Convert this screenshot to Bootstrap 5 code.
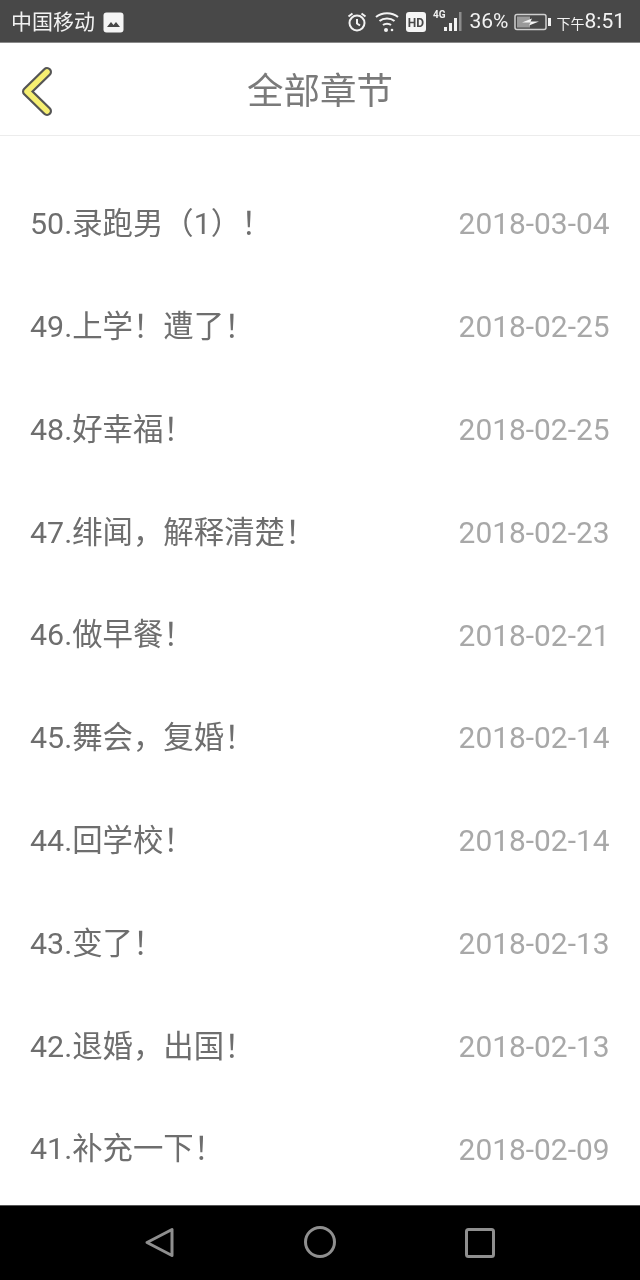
<!DOCTYPE html>
<html lang="zh">
<head>
<meta charset="utf-8">
<title>全部章节</title>
<link href="https://cdn.jsdelivr.net/npm/bootstrap@5.3.0/dist/css/bootstrap.min.css" rel="stylesheet">
<style>
html,body{margin:0;height:1280px;overflow:hidden;background:#fff}
body{font-family:Roboto,"Noto Sans CJK SC",sans-serif}
.phone{height:1280px;width:640px}
.statusbar{height:43px;background:#484848;color:#f2f2f2;font-size:21px;padding:0 15px 0 11px;border-bottom:1px solid #8a8a8a;will-change:transform}
.statusbar .carrier{line-height:1;margin-top:2px}
.picicon{margin-left:8px;margin-top:2px}
.ic-alarm{margin-top:1px}
.ic-wifi{margin-left:7px;margin-top:1px}
.ic-hd{margin-left:7px;margin-top:1px}
.ic-sig{margin-left:7px}
.pct{font-size:21px;line-height:1;margin-left:5px;margin-top:1px}
.ic-bat{margin-left:5px;margin-top:1px}
.ampm{font-size:14px;line-height:1;margin-top:5px;margin-left:6px}
.clock{font-size:21px;line-height:1;margin-top:1px}
.topbar{height:93px;border-bottom:1px solid #ececec;padding-left:20px}
.topbar .ttl{font-size:36.5px;color:#7a7a7a;line-height:1;left:0;right:0;top:50%;margin-top:3px;transform:translateY(-50%);text-align:center;will-change:transform}
.backic{margin-top:4px}
.chapters{padding-top:37px;flex:1 1 auto;min-height:0;overflow:hidden;will-change:transform}
.chap{height:102.8px;padding:0 30.5px 0 30px}
.chap .nm{font-size:30.4px;color:#6e6e6e;line-height:1}
.chap .dt{font-size:29.9px;color:#a8a8a8;line-height:1}
.navbarbottom{height:75px;background:#000;border-top:1px solid #555;flex:none}
</style>
</head>
<body>
<div class="phone d-flex flex-column">
  <div class="statusbar d-flex align-items-center">
    <span class="carrier">中国移动</span>
    <svg class="picicon" width="21" height="21" viewBox="0 0 21 21"><rect x="0.5" y="0.5" width="20" height="20" rx="3" fill="#f5f5f5"/><path d="M4 15l4-5 2.500 3 2.500-3 4 5z" fill="#484848"/></svg>
    <span class="ms-auto d-flex align-items-center">
      <svg class="ic-alarm" width="22" height="22" viewBox="0 0 22 22" fill="none" stroke="#f2f2f2" stroke-width="2"><circle cx="11" cy="12" r="7.500"/><path d="M11 8v4.500l3 2M2.500 5.500l4-3M19.500 5.500l-4-3"/></svg>
      <svg class="ic-wifi" width="24" height="22" viewBox="0 0 24 22" fill="none" stroke="#f2f2f2" stroke-width="2"><path d="M1 6c6-5 16-5 22 0M4.500 10c4-3.500 11-3.500 15 0M8 14c2-1.700 6-1.700 8 0"/><circle cx="11" cy="19" r="2" fill="#f2f2f2" stroke="none"/><circle cx="17" cy="19" r="1.300" fill="#f2f2f2" stroke="none"/></svg>
      <svg class="ic-hd" width="20" height="20" viewBox="0 0 20 20"><rect width="20" height="20" rx="3" fill="#f5f5f5"/><text x="10" y="15" text-anchor="middle" font-size="12" font-weight="700" font-family="Roboto" fill="#484848">HD</text></svg>
      <svg class="ic-sig" width="32" height="24" viewBox="0 0 32 24"><text x="0" y="9" font-size="10" font-weight="700" font-family="Roboto" fill="#f2f2f2">4G</text><rect x="11" y="18" width="3" height="4" fill="#f2f2f2"/><rect x="16" y="14" width="3" height="8" fill="#f2f2f2"/><rect x="21" y="9" width="3" height="13" fill="#f2f2f2"/><rect x="26" y="3" width="2.500" height="19" fill="#8d8d8d"/></svg>
      <span class="pct">36%</span>
      <svg class="ic-bat" width="37" height="18" viewBox="0 0 37 18"><rect x="1" y="1.500" width="31" height="15" rx="2" fill="none" stroke="#cfcfcf" stroke-width="1.500"/><rect x="3" y="3.500" width="13" height="11" fill="#9a9a9a"/><path d="M8 9.500l10-4-1.500 3H25l-10 4 1.500-3z" fill="#f5f5f5"/><rect x="34" y="5" width="3" height="8" fill="#f2f2f2"/></svg>
      <span class="ampm">下午</span><span class="clock">8:51</span>
    </span>
  </div>
  <div class="topbar position-relative d-flex align-items-center">
    <svg class="backic" width="34" height="52" viewBox="0 0 34 52"><path d="M27 7L7 26.500 27 46" fill="none" stroke="#555" stroke-width="10" stroke-linecap="round" stroke-linejoin="round"/><path d="M27 7L7 26.500 27 46" fill="none" stroke="#f6ef71" stroke-width="5.500" stroke-linecap="round" stroke-linejoin="round"/></svg>
    <div class="ttl position-absolute">全部章节</div>
  </div>
  <div class="chapters">
    <div class="chap d-flex justify-content-between align-items-center"><span class="nm">50.录跑男（1）！</span><span class="dt">2018-03-04</span></div>
    <div class="chap d-flex justify-content-between align-items-center"><span class="nm">49.上学！遭了！</span><span class="dt">2018-02-25</span></div>
    <div class="chap d-flex justify-content-between align-items-center"><span class="nm">48.好幸福！</span><span class="dt">2018-02-25</span></div>
    <div class="chap d-flex justify-content-between align-items-center"><span class="nm">47.绯闻，解释清楚！</span><span class="dt">2018-02-23</span></div>
    <div class="chap d-flex justify-content-between align-items-center"><span class="nm">46.做早餐！</span><span class="dt">2018-02-21</span></div>
    <div class="chap d-flex justify-content-between align-items-center"><span class="nm">45.舞会，复婚！</span><span class="dt">2018-02-14</span></div>
    <div class="chap d-flex justify-content-between align-items-center"><span class="nm">44.回学校！</span><span class="dt">2018-02-14</span></div>
    <div class="chap d-flex justify-content-between align-items-center"><span class="nm">43.变了！</span><span class="dt">2018-02-13</span></div>
    <div class="chap d-flex justify-content-between align-items-center"><span class="nm">42.退婚，出国！</span><span class="dt">2018-02-13</span></div>
    <div class="chap d-flex justify-content-between align-items-center"><span class="nm">41.补充一下！</span><span class="dt">2018-02-09</span></div>
  </div>
  <div class="navbarbottom d-flex align-items-center justify-content-center">
    <svg width="400" height="48" viewBox="0 0 400 48" fill="none" stroke="#8f8f8f" stroke-width="3" stroke-linejoin="round"><path d="M52 10.500v26L27 23.500z"/><circle cx="200" cy="23" r="14.500"/><rect x="346.500" y="10.500" width="27" height="27" rx="2"/></svg>
  </div>
</div>
<script src="https://cdn.jsdelivr.net/npm/bootstrap@5.3.0/dist/js/bootstrap.bundle.min.js"></script>
</body>
</html>
